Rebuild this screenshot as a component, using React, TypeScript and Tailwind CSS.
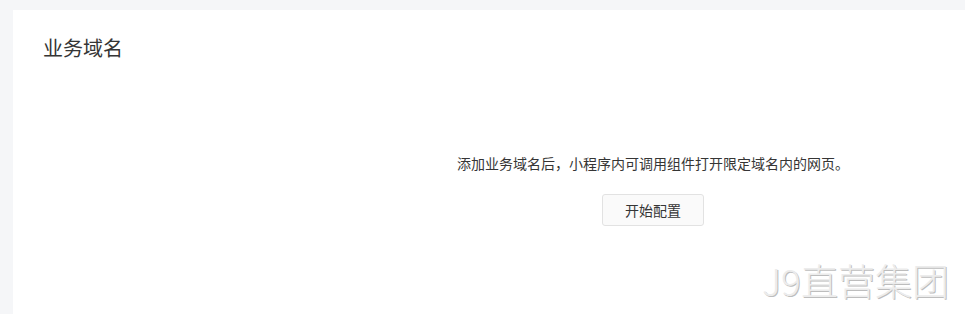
export default function App() {
  const font = { fontFamily: '"Noto Sans CJK SC", "Liberation Sans", sans-serif' };
  return (
    <div className="relative h-[314px] w-[965px] overflow-hidden bg-[#f5f6f8]" style={font}>
      <div className="ml-[13px] mt-[10px] h-[400px] w-[1280px] bg-white">
        <div className="px-[30px] pt-[23px] text-[20px] leading-[30px] text-[#353535]">业务域名</div>
        <div className="mt-[90px] flex flex-col items-center">
          <p className="text-[14px] leading-[20px] text-[#353535]">添加业务域名后，小程序内可调用组件打开限定域名内的网页。</p>
          <button className="mt-[21px] h-[32px] w-[102px] rounded-[3px] border border-[#e2e2e2] bg-[#fafafa] text-[14px] text-[#353535]">
            开始配置
          </button>
        </div>
      </div>
      <div
        className="absolute left-[762px] top-[256px] text-[37px] font-light leading-[48px] text-[#ececec]"
        style={{ textShadow: '1px 1px 0 #bdbdbd, -1px -1px 0 #ffffff' }}
      >
        J9直营集团
      </div>
    </div>
  );
}
